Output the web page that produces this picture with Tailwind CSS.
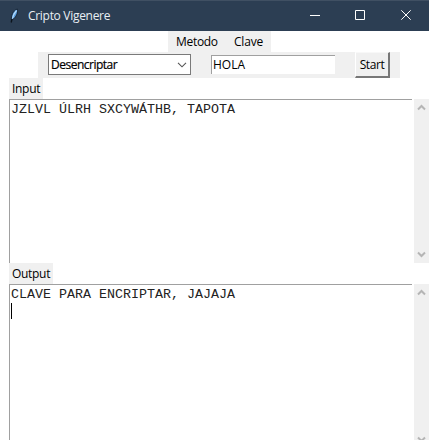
<!DOCTYPE html>
<html lang="es">
<head>
<meta charset="utf-8">
<title>Cripto Vigenere</title>
<script src="https://cdn.jsdelivr.net/npm/@tailwindcss/browser@4"></script>
</head>
<body class="w-[429px] h-[440px] overflow-hidden bg-white text-black text-[12px] leading-[16px] font-['Open_Sans','Noto_Sans',sans-serif] whitespace-nowrap">
<header class="h-[31px] bg-[#2c3e53] border-t border-[#405063] flex items-center text-[#e9eef3]">
  <svg class="ml-[8px] w-[14px] h-[16px] shrink-0" viewBox="0 0 14 16">
    <path d="M3.500 12.500C2.800 8 5 2.500 9.300 1C10.300 4.500 8 9.500 4.500 11.500Z" fill="#5c9fe0" stroke="#101923" stroke-width=".8"/>
    <path d="M4.500 10.500C5 8 6.300 5 8.500 2.500" fill="none" stroke="#b5dafa" stroke-width="1.200"/>
    <path d="M3.200 14.500L4 11" stroke="#0c131b" stroke-width="1.300"/>
  </svg>
  <span class="ml-[6px] w-[260px] tracking-[-0.3px]">Cripto Vigenere</span>
  <svg class="w-[141px] h-[30px] shrink-0" viewBox="288 1 141 30" fill="none" stroke="#fff" stroke-width="1">
    <path d="M310 15.500h10"/>
    <path d="M355.500 10.500h9v9h-9z"/>
    <path d="M401.300 10.300l9.400 9.400M410.700 10.300l-9.400 9.400"/>
  </svg>
</header>
<main>
  <div class="ml-[168px] w-[103px] h-[21px] bg-[#f0f0f0] flex items-center pl-[8px]">
    <span class="w-[58px] tracking-[-0.3px]">Metodo</span><span class="tracking-[-0.2px]">Clave</span>
  </div>
  <div class="ml-[38px] w-[362px] h-[26px] bg-[#f0f0f0] flex items-start pl-[10px]">
    <div class="mt-[2px] w-[143px] h-[21px] bg-white border border-[#7a7a7a] flex items-center justify-between pl-[2px] pr-[3px]">
      <span class="tracking-[-0.5px] [-webkit-text-stroke:0.2px_black]">Desencriptar</span>
      <svg class="w-[10px] h-[6px]" viewBox="0 0 10 6" fill="none" stroke="#555" stroke-width="1.100"><path d="M1 .8L5 4.800L9 .8"/></svg>
    </div>
    <div class="ml-[20px] mt-[3px] w-[124px] h-[19px] bg-white border-t border-l border-[#a0a0a0] pl-px leading-[18px] tracking-[0px]">HOLA</div>
    <button class="ml-[20px] w-[35px] h-[26px] bg-[#f0f0f0] border-t border-l border-r-2 border-b-2 border-t-[#f8f8f8] border-l-white border-r-[#777] border-b-[#777] flex items-center justify-center tracking-[-0.4px]">Start</button>
  </div>
  <section>
    <div class="ml-[9px] w-[34px] h-[21px] bg-[#f0f0f0] pl-[3px] leading-[22px] tracking-[-0.3px]">Input</div>
    <div class="ml-[9px] flex h-[164px]">
      <div class="w-[403px] border-t border-l border-[#a0a0a0] pl-[1px] pt-[2px] font-['Courier_New','Liberation_Mono',monospace] text-[13.33px] leading-[16px] text-[#222]">JZLVL ÚLRH SXCYWÁTHB, TAPOTA</div>
      <div class="ml-[2px] w-[15px] bg-[#f0f0f0] flex flex-col items-center justify-between py-[5px]">
        <svg class="w-[9px] h-[7px]" viewBox="0 0 9 7" fill="none" stroke="#b5b5b5" stroke-width="2"><path d="M1 5.500L4.500 2L8 5.500"/></svg>
        <svg class="w-[9px] h-[7px]" viewBox="0 0 9 7" fill="none" stroke="#b5b5b5" stroke-width="2"><path d="M1 1.500L4.500 5L8 1.500"/></svg>
      </div>
    </div>
  </section>
  <section>
    <div class="ml-[9px] w-[44px] h-[21px] bg-[#f0f0f0] pl-[3px] leading-[22px] tracking-[-0.3px]">Output</div>
    <div class="ml-[9px] flex h-[164px]">
      <div class="w-[403px] border-t border-l border-[#a0a0a0] pl-[1px] pt-[2px] font-['Courier_New','Liberation_Mono',monospace] text-[13.33px] leading-[16px] text-[#222]">CLAVE PARA ENCRIPTAR, JAJAJA
        <div class="w-px h-[16px] bg-black"></div>
      </div>
      <div class="ml-[2px] w-[15px] bg-[#f0f0f0] flex flex-col items-center justify-between py-[5px]">
        <svg class="w-[9px] h-[7px]" viewBox="0 0 9 7" fill="none" stroke="#b5b5b5" stroke-width="2"><path d="M1 5.500L4.500 2L8 5.500"/></svg>
        <svg class="w-[9px] h-[7px]" viewBox="0 0 9 7" fill="none" stroke="#b5b5b5" stroke-width="2"><path d="M1 1.500L4.500 5L8 1.500"/></svg>
      </div>
    </div>
  </section>
</main>
</body>
</html>
